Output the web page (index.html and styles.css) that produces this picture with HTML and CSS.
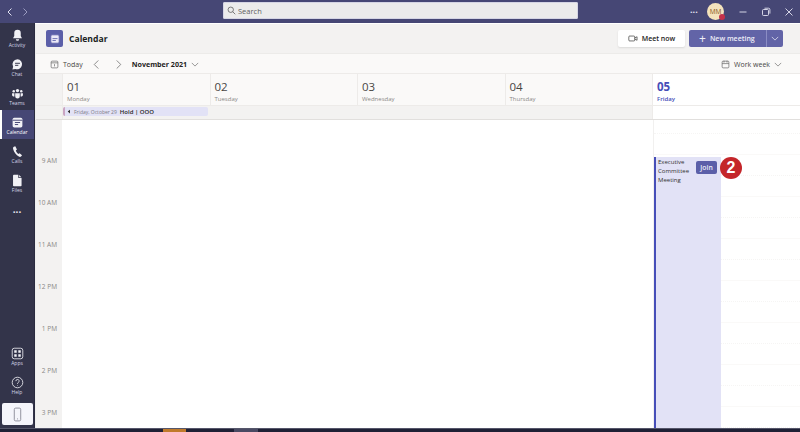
FILE: index.html
```html
<!DOCTYPE html>
<html lang="en">
<head>
<meta charset="utf-8">
<title>Calendar</title>
<link rel="stylesheet" href="styles.css">
</head>
<body>
<div class="app">
  <header class="titlebar">
    <div class="history">
      <svg viewBox="0 0 10 10" class="chev"><path d="M6.500 1.500 3 5l3.500 3.500"/></svg>
      <svg viewBox="0 0 10 10" class="chev dim"><path d="M3.500 1.500 7 5 3.500 8.500"/></svg>
    </div>
    <div class="search">
      <svg viewBox="0 0 12 12" class="search-icon"><circle cx="5" cy="5" r="3.600"/><path d="M7.600 7.600 11 11"/></svg>
      <span>Search</span>
    </div>
    <div class="win">
      <span class="more">···</span>
      <span class="avatar">MM<i class="presence"></i></span>
      <svg viewBox="0 0 10 10" class="wbtn"><path d="M1.500 5h7"/></svg>
      <svg viewBox="0 0 10 10" class="wbtn"><rect x="1.500" y="2.500" width="6" height="6" rx="1"/><path d="M3.500 1.200h4a1.400 1.400 0 0 1 1.400 1.400v4"/></svg>
      <svg viewBox="0 0 10 10" class="wbtn"><path d="m1.500 1.500 7 7M8.500 1.500l-7 7"/></svg>
    </div>
  </header>
  <div class="body">
    <nav class="rail">
      <a class="rail-item">
        <svg viewBox="0 0 16 16"><path d="M8 1a4 4 0 0 0-4 4v3.500L2.500 11.500h11L12 8.500V5a4 4 0 0 0-4-4Z"/><path d="M6 12.500h4a2 2 0 0 1-4 0Z"/></svg>
        <span>Activity</span>
      </a>
      <a class="rail-item">
        <svg viewBox="0 0 16 16"><path d="M8 1.500a6.200 6.200 0 0 0-5.400 9.300L1.800 14.300l3.500-.8A6.200 6.200 0 1 0 8 1.500Z"/><path class="cut" d="M5 6.500h6M5 9h4"/></svg>
        <span>Chat</span>
      </a>
      <a class="rail-item">
        <svg viewBox="0 0 18 16"><circle cx="9" cy="4" r="2.300"/><circle cx="3.800" cy="5" r="1.700"/><circle cx="14.200" cy="5" r="1.700"/><path d="M5.800 7.500h6.400v4.200a3.200 3.200 0 0 1-6.400 0Z"/><path d="M1.500 7.500h3.200v4.500a2.300 2.300 0 0 1-3.200-2ZM13.300 7.500h3.200V10a2.300 2.300 0 0 1-3.200 2Z"/></svg>
        <span>Teams</span>
      </a>
      <a class="rail-item active">
        <svg viewBox="0 0 16 16"><rect x="2" y="2" width="12" height="12" rx="2"/><path class="cut" d="M2 5.200h12M4.800 8h6.400M4.800 10.500h4"/></svg>
        <span>Calendar</span>
      </a>
      <a class="rail-item">
        <svg viewBox="0 0 16 16"><path d="M5.300 1.500 3.500 2.300C2.400 2.900 2.300 4 2.700 5.300c1 3.700 3.800 7.300 6.900 9 1.200.6 2.200.5 3-.4l1-1.300-3-2.500-1.600.9c-1.300-.8-2.500-2.500-3.100-4.200l1.400-1.200Z"/></svg>
        <span>Calls</span>
      </a>
      <a class="rail-item">
        <svg viewBox="0 0 16 16"><path d="M3.500 1h5.500v4h4v9a1 1 0 0 1-1 1h-8.500a1 1 0 0 1-1-1V2a1 1 0 0 1 1-1Z"/><path d="M10 1.200 12.800 4H10Z"/></svg>
        <span>Files</span>
      </a>
      <div class="rail-more">···</div>
      <div class="rail-spacer"></div>
      <a class="rail-item outline">
        <svg viewBox="0 0 16 16"><rect x="1.500" y="1.500" width="13" height="13" rx="2.500"/><path d="M4 4h3v3H4zM9 4h3v3H9zM4 9h3v3H4zM9 9h3v3H9z" class="cells"/></svg>
        <span>Apps</span>
      </a>
      <a class="rail-item outline">
        <svg viewBox="0 0 16 16"><circle cx="8" cy="8" r="6.500"/><path d="M6 6.300A2 2 0 1 1 8.900 8C8.200 8.400 8 8.800 8 9.600M8 11.400v.6"/></svg>
        <span>Help</span>
      </a>
      <div class="device">
        <svg viewBox="0 0 12 16"><rect x="2.500" y="1" width="7" height="14" rx="1.500"/><path d="M5.500 12.800h1"/></svg>
      </div>
    </nav>
    <main class="main">
      <section class="head">
        <div class="cal-logo">
          <svg viewBox="0 0 12 12"><rect x="1" y="1" width="10" height="10" rx="1.500"/><path d="M3 5.500h6M3 7.800h4"/></svg>
        </div>
        <h1>Calendar</h1>
        <button class="btn-meet">
          <svg viewBox="0 0 14 10"><rect x="1" y="1.500" width="8.500" height="7" rx="1.200"/><path d="m9.500 4.200 3.300-1.700v5L9.500 5.800"/></svg>
          Meet now
        </button>
        <div class="btn-new">
          <span class="new-main"><b class="plus">+</b>New meeting</span>
          <span class="new-caret"><svg viewBox="0 0 10 6"><path d="m1 1 4 4 4-4"/></svg></span>
        </div>
      </section>
      <section class="toolbar">
        <svg viewBox="0 0 12 12" class="tb-icon"><rect x="1.500" y="1.500" width="9" height="9" rx="1.300"/><path d="M1.500 3.800h9M6 5.500v3"/></svg>
        <span class="today">Today</span>
        <svg viewBox="0 0 10 12" class="tb-nav"><path d="M7 1.500 2.500 6 7 10.500"/></svg>
        <svg viewBox="0 0 10 12" class="tb-nav"><path d="M3 1.500 7.500 6 3 10.500"/></svg>
        <strong class="month">November 2021</strong>
        <svg viewBox="0 0 10 6" class="tb-caret"><path d="m1 1 4 4 4-4"/></svg>
        <span class="grow"></span>
        <svg viewBox="0 0 12 12" class="tb-icon"><rect x="1.500" y="1.500" width="9" height="9" rx="1.300"/><path d="M1.500 4.800h9M4 1v2.500M8 1v2.500" /></svg>
        <span class="week">Work week</span>
        <svg viewBox="0 0 10 6" class="tb-caret"><path d="m1 1 4 4 4-4"/></svg>
      </section>
      <section class="days">
        <div class="gutter"></div>
        <div class="day"><div class="num">01</div><div class="name">Monday</div></div>
        <div class="day"><div class="num">02</div><div class="name">Tuesday</div></div>
        <div class="day"><div class="num">03</div><div class="name">Wednesday</div></div>
        <div class="day"><div class="num">04</div><div class="name">Thursday</div></div>
        <div class="day today-col"><div class="num">05</div><div class="name">Friday</div></div>
      </section>
      <section class="allday">
        <div class="gutter"></div>
        <div class="allday-main">
          <div class="hold">
            <svg viewBox="0 0 6 8"><path d="M4.500 1v6L1 4Z"/></svg>
            <span class="hold-date">Friday, October 29</span>
            <span class="hold-title">Hold | OOO</span>
          </div>
        </div>
        <div class="allday-today"></div>
      </section>
      <section class="grid">
        <div class="times">
          <div class="first"></div>
          <div class="time">9 AM</div>
          <div class="time">10 AM</div>
          <div class="time">11 AM</div>
          <div class="time">12 PM</div>
          <div class="time">1 PM</div>
          <div class="time">2 PM</div>
          <div class="time">3 PM</div>
        </div>
        <div class="workdays"></div>
        <div class="friday">
          <div class="half top"></div><div class="hour short"></div>
          <div class="half"></div><div class="hour"></div>
          <div class="half"></div><div class="hour"></div>
          <div class="half"></div><div class="hour"></div>
          <div class="half"></div><div class="hour"></div>
          <div class="half"></div><div class="hour"></div>
          <div class="half"></div><div class="hour"></div>
          <div class="half"></div><div class="hour"></div>
          <article class="event">
            <div class="event-title">Executive Committee Meeting</div>
            <span class="join">Join</span>
          </article>
          <span class="callout">2</span>
        </div>
      </section>
    </main>
  </div>
  <footer class="taskbar"><span class="task-a"></span><span class="task-b"></span></footer>
</div>
</body>
</html>
```
FILE: styles.css
```css
* { box-sizing: border-box; }
html, body { margin: 0; height: 100%; overflow: hidden; }
body { font-family: "Open Sans", "Liberation Sans", sans-serif; color: #252423; background: #fff; }
svg { display: block; fill: none; stroke: currentColor; }
.app { width: 800px; height: 432px; display: flex; flex-direction: column; }

.titlebar { height: 23px; flex: none; background: #464775; display: flex; align-items: center; position: relative; }
.history { display: flex; gap: 5px; padding-left: 5px; }
.chev { width: 10px; height: 10px; color: #e0e1f0; stroke-width: 1; }
.chev.dim { color: #9a9bc0; }
.search { position: absolute; left: 223px; top: 2px; width: 355px; height: 17px; background: #ebebeb; border-radius: 2px; display: flex; align-items: center; gap: 2px; padding-left: 4px; font-size: 7.500px; color: #616161; box-shadow: 0 0 0 1px #d5d5e4 inset; }
.search-icon { width: 9px; height: 9px; stroke-width: 1; color: #555; }
.win { margin-left: auto; display: flex; align-items: center; padding-right: 6px; color: #e4e4f2; }
.more { font-size: 9px; width: 11px; font-weight: 700; margin-right: 6px; }
.avatar { position: relative; width: 17px; height: 17px; border-radius: 50%; background: #f4e3bd; color: #8a5a20; font-size: 6.500px; display: flex; align-items: center; justify-content: center; margin-right: 1px; }
.presence { position: absolute; right: -1px; bottom: 0; width: 6px; height: 6px; border-radius: 50%; background: #c4314b; }
.wbtn { width: 10px; height: 10px; stroke-width: .9; margin-left: 13px; }

.body { flex: 1; min-height: 0; display: flex; }
.rail { width: 35px; flex: none; background: #33344a; display: flex; flex-direction: column; align-items: center; border-right: 1px solid #2a2b3f; }
.rail-item { width: 100%; height: 29px; display: flex; flex-direction: column; align-items: center; justify-content: center; color: #d4d5e8; font-size: 5px; line-height: 6px; position: relative; padding-top: 1px; }
.rail-item svg { width: 13px; height: 13px; fill: #f1f1f6; stroke: none; }
.rail-item .cut { fill: none; stroke: #33344a; stroke-width: 1.200; }
.rail-item.active { background: #464775; color: #fff; box-shadow: inset 2px 0 0 #fff; }
.rail-item.active .cut { stroke: #464775; }
.rail-more { height: 24px; line-height: 24px; color: #e6e6f0; font-size: 10px; font-weight: 700; margin-top: 3px; }
.rail-spacer { flex: 1; }
.rail-item.outline { padding-top: 0; }
.rail-item.outline svg { fill: none; stroke: #f1f1f6; stroke-width: 1; }
.rail-item.outline .cells { fill: #f1f1f6; stroke: none; }
.device { width: 31px; height: 22px; background: #f5f5fb; border-radius: 2px; display: flex; align-items: center; justify-content: center; color: #70717f; margin-top: 3px; margin-bottom: 3px; }
.device svg { width: 11px; height: 15px; stroke-width: .8; }

.main { flex: 1; min-width: 0; display: flex; flex-direction: column; background: #fff; margin-top: 1px; border-left: 1px solid #eee; }
.head { height: 30px; flex: none; background: #f3f2f1; display: flex; align-items: center; padding: 0 17px 0 10px; border-bottom: 1px solid #ecebe9; }
.cal-logo { width: 17px; height: 17px; background: #5b5fa8; border-radius: 2px; display: flex; align-items: center; justify-content: center; color: #5b5fa8; }
.cal-logo svg { width: 10px; height: 10px; fill: #eceaf8; stroke-width: 1; }
.head h1 { font-size: 8.600px; font-weight: 700; margin: 1px 0 0 6px; flex: 1; color: #201f1e; }
.btn-meet { width: 67px; height: 17px; background: #fff; border: 0; border-radius: 2px; box-shadow: 0 1px 2px rgba(0,0,0,.1); display: flex; align-items: center; justify-content: center; gap: 4px; font: 600 7px "Open Sans", sans-serif; color: #252423; padding: 0; margin-right: 4px; }
.btn-meet svg { width: 10px; height: 7px; stroke-width: .9; }
.btn-new { width: 94px; height: 17px; display: flex; color: #eeeef8; font-size: 7px; font-weight: 600; }
.new-main { flex: 1; background: #6264a7; border-radius: 2px 0 0 2px; display: flex; align-items: center; padding-left: 10px; gap: 4px; border-right: 1px solid #8b8dc4; }
.plus { font-weight: 400; font-size: 12px; line-height: 12px; }
.new-caret { width: 16px; background: #6264a7; border-radius: 0 2px 2px 0; display: flex; align-items: center; justify-content: center; }
.new-caret svg { width: 8px; height: 5px; stroke-width: .9; }

.toolbar { height: 20px; flex: none; background: #faf9f8; display: flex; align-items: center; padding: 1px 18px 0 14px; font-size: 7px; color: #484644; border-bottom: 1px solid #edebe9; }
.tb-icon { width: 9px; height: 9px; stroke-width: .9; color: #616161; }
.today { margin: 0 9px 0 4px; }
.tb-nav { width: 9px; height: 11px; stroke-width: .8; color: #616161; margin-right: 13px; }
.tb-nav + .tb-nav { margin-right: 9px; }
.month { font-size: 7.100px; font-weight: 700; color: #252423; margin-right: 4px; }
.tb-caret { width: 8px; height: 5px; stroke-width: .8; color: #616161; }
.grow { flex: 1; }
.week { margin: 0 4px 0 4px; }

.gutter { width: 26px; flex: none; }
.days { height: 32px; flex: none; display: flex; background: #faf9f8; border-bottom: 1px solid #edebe9; }
.days .gutter { background: #f3f2f1; }
.day { width: 147.500px; flex: none; padding: 6px 0 0 4px; border-left: 1px solid #edebe9; }
.num { font-size: 11.500px; line-height: 13px; color: #484644; }
.name { font-size: 6px; line-height: 9px; color: #8a8886; margin-top: 2px; }
.today-col { flex: 1; width: auto; background: #fff; }
.today-col .num, .today-col .name { color: #464eb8; }
.today-col .num { font-weight: 700; }
.today-col .name { font-weight: 600; }

.allday { height: 14px; flex: none; display: flex; background: #f3f2f1; border-bottom: 1px solid #e1dfdd; }
.allday-main { width: 590px; flex: none; padding-top: 1px; border-left: 1px solid #edebe9; }
.allday-today { flex: 1; background: #fff; border-left: 1px solid #edebe9; }
.hold { width: 145px; height: 9px; background: #e2e2f6; border-left: 2px solid #c9a4c2; border-radius: 2px; display: flex; align-items: center; font-size: 5px; color: #7a7a85; padding-left: 2px; }
.hold svg { width: 4px; height: 5px; fill: #252423; stroke: none; margin-right: 3px; }
.hold-title { color: #252423; font-size: 6px; font-weight: 600; margin-left: 3px; }

.grid { flex: 1; min-height: 0; display: flex; }
.times { width: 26px; flex: none; background: #f3f2f1; }
.first { height: 36px; }
.time { height: 42px; font-size: 6.500px; color: #8a8886; text-align: right; padding-right: 5px; line-height: 9px; }
.workdays { width: 591px; flex: none; background: #fff; }
.friday { flex: 1; position: relative; background: #fff; border-left: 1px solid #f1f0ef; overflow: hidden; }
.half { height: 21px; border-bottom: 1px dotted #f6f5f4; }
.hour { height: 21px; border-bottom: 1px solid #faf9f8; }
.half.top { height: 14px; }
.event { position: absolute; left: 0; top: 37px; width: 67px; bottom: 0; background: #e2e2f6; border-left: 2px solid #464eb8; padding: 1px 0 0 2px; font-size: 6px; line-height: 9px; color: #323130; box-shadow: -1px 0 0 #fff; }
.event-title { width: 38px; }
.join { position: absolute; left: 40px; top: 4px; width: 21px; height: 13px; background: #5b5fa8; color: #eceefa; font-size: 6.800px; font-weight: 600; border-radius: 2px; display: flex; align-items: center; justify-content: center; }
.callout { position: absolute; left: 66px; top: 37px; width: 22px; height: 22px; border-radius: 50%; background: #c4262a; color: #fff; font: 700 16px/22px "Liberation Sans", sans-serif; text-align: center; }

.taskbar { height: 4px; flex: none; background: #1f2035; border-top: 1px solid #55566a; display: flex; }
.task-a { margin-left: 163px; width: 23px; background: #c07a2b; }
.task-b { margin-left: 48px; width: 24px; background: #4a4a63; }
```
